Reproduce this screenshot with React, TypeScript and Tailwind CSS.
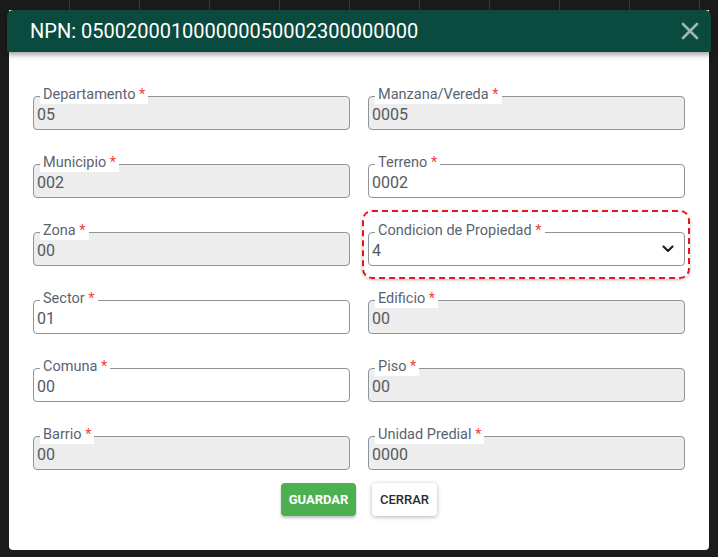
import React from "react";

type Field = { label: string; value: string; enabled?: boolean; select?: boolean; highlight?: boolean };

const rows: [Field, Field][] = [
  [{ label: "Departamento", value: "05" }, { label: "Manzana/Vereda", value: "0005" }],
  [{ label: "Municipio", value: "002" }, { label: "Terreno", value: "0002", enabled: true }],
  [{ label: "Zona", value: "00" }, { label: "Condicion de Propiedad", value: "4", enabled: true, select: true, highlight: true }],
  [{ label: "Sector", value: "01", enabled: true }, { label: "Edificio", value: "00" }],
  [{ label: "Comuna", value: "00", enabled: true }, { label: "Piso", value: "00" }],
  [{ label: "Barrio", value: "00" }, { label: "Unidad Predial", value: "0000" }],
];

function Cell({ f }: { f: Field }) {
  return (
    <div className="relative">
      {f.highlight && (
        <div className="pointer-events-none absolute -left-[6px] -right-[5px] -top-[22px] -bottom-[13px] rounded-[10px] border-2 border-dashed border-[#e8141b] shadow-[0_1px_3px_rgba(0,0,0,0.25)]" />
      )}
      <div
        className={`relative flex h-[34px] items-center rounded-[4px] border border-[#8e949b] pl-[3px] pr-[10px] pt-[4px] ${
          f.enabled ? "bg-white" : "bg-[#ecedec]"
        }`}
      >
        <span className="flex-1 text-[16px] leading-[20px] text-[#555a60]">{f.value}</span>
        {f.select && (
          <svg width="12" height="8" viewBox="0 0 12 8" className="-mt-[5px]">
            <path d="M1.5 1.5 L6 6 L10.5 1.5" fill="none" stroke="#222" strokeWidth="2.2" strokeLinecap="round" strokeLinejoin="round" />
          </svg>
        )}
      </div>
      <div className="absolute -top-[10px] left-[7px] bg-white px-[3px] text-[14.5px] leading-[18px] text-[#5b6371]">
        {f.label} <span className="text-[#f0413a]">*</span>
      </div>
    </div>
  );
}

export default function App() {
  return (
    <div
      className="relative h-[557px] w-[718px] overflow-hidden bg-[#1b1b1b] pl-[9px] pt-[10px]"
      style={{ fontFamily: "Roboto, 'Liberation Sans', sans-serif" }}
    >
      <div className="absolute left-0 right-0 top-0 flex h-[10px]">
        {Array.from({ length: 10 }).map((_, i) => (
          <div key={i} className="h-full w-[70px] border-r border-[#3a3a3a]" />
        ))}
      </div>
      <div className="relative w-[700px] rounded-b-[4px] bg-white">
        <div className="relative z-10 -mx-[2px] flex h-[42px] items-center justify-between rounded-t-[6px] bg-[#0b4a3e] pl-[23px] pr-[12px] shadow-[0_3px_5px_rgba(0,0,0,0.35)]">
          <span className="text-[20px] leading-[24px] text-white">NPN: 050020001000000050002300000000</span>
          <svg width="18" height="18" viewBox="0 0 18 18">
            <path d="M2 2 L16 16 M16 2 L2 16" stroke="#9bb9b1" strokeWidth="2.6" strokeLinecap="round" />
          </svg>
        </div>
        <div className="px-[24px] pb-[34px] pt-[44px]">
          <div className="grid grid-cols-2 gap-x-[18px] gap-y-[34px]">
            {rows.map(([a, b], i) => (
              <React.Fragment key={i}>
                <Cell f={a} />
                <Cell f={b} />
              </React.Fragment>
            ))}
          </div>
          <div className="mt-[13px] flex justify-center gap-[16px]">
            <button className="h-[33px] w-[75px] rounded-[4px] bg-[#4caf50] text-[13px] font-bold text-white shadow-[0_2px_3px_rgba(0,0,0,0.25)]">
              GUARDAR
            </button>
            <button className="h-[33px] w-[65px] rounded-[4px] bg-white text-[13px] font-medium text-[#2b2b2b] shadow-[0_1px_4px_rgba(0,0,0,0.3)]">
              CERRAR
            </button>
          </div>
        </div>
      </div>
    </div>
  );
}
